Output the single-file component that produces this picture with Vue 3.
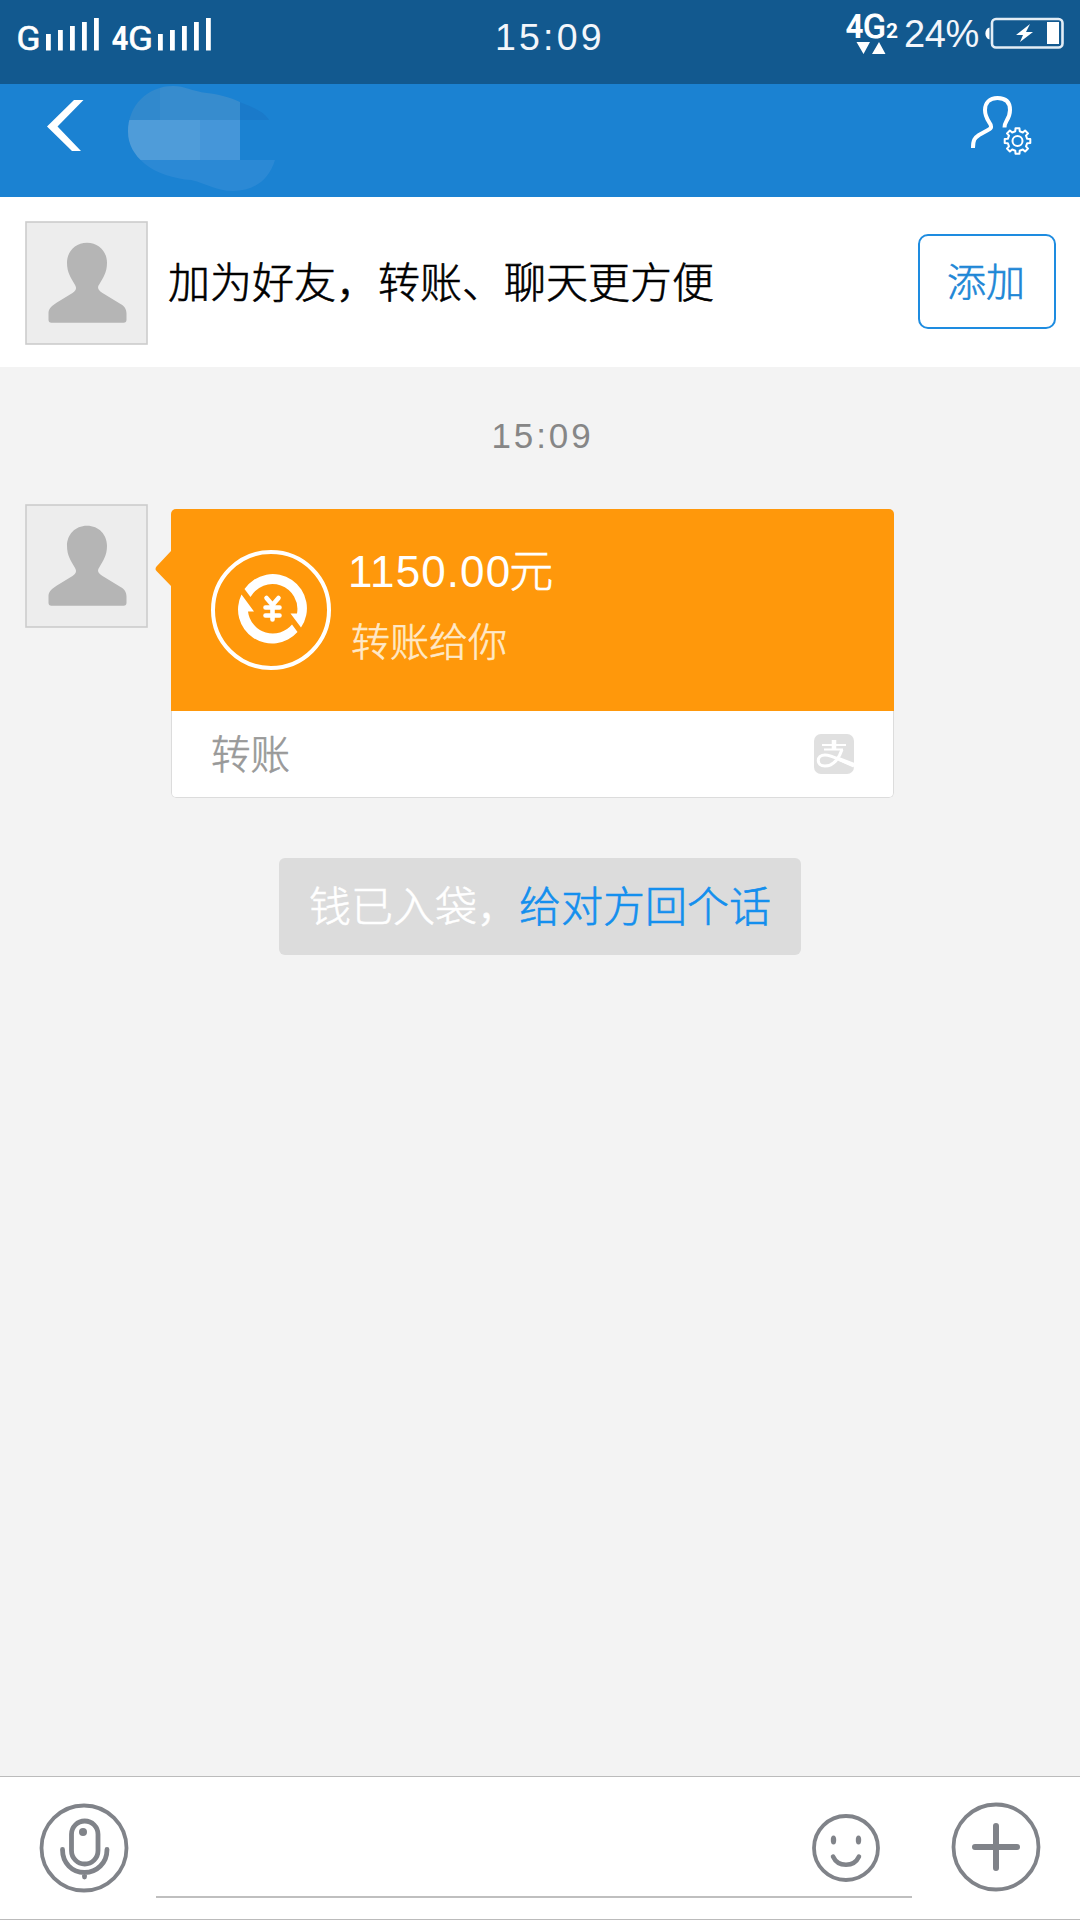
<template>
    <div class="chat-page">
        <div class="status-bar">
            <div class="status-signals">
                <svg width="196" height="84" viewBox="16 0 196 84" fill="#fff">
                    <text class="signal-text" x="16.500" y="50" textLength="24" lengthAdjust="spacingAndGlyphs">G</text>
                    <text class="signal-text signal-bold" x="111.500" y="50" textLength="17" lengthAdjust="spacingAndGlyphs">4</text>
                    <text class="signal-text" x="128" y="50" textLength="25" lengthAdjust="spacingAndGlyphs">G</text>
                    <rect v-for="bar in bars" :key="bar.x" :x="bar.x" :y="bar.y" width="4.800" :height="50.5 - bar.y" />
                </svg>
            </div>
            <span class="status-time">15:09</span>
            <div class="status-right">
                <svg width="54" height="84" viewBox="846 0 54 84" fill="#fff">
                    <text class="network-text signal-bold" x="845.500" y="38" textLength="18" lengthAdjust="spacingAndGlyphs">4</text>
                    <text class="network-text" x="863" y="38" textLength="23" lengthAdjust="spacingAndGlyphs">G</text>
                    <text class="network-small" x="886" y="38" textLength="12" lengthAdjust="spacingAndGlyphs">2</text>
                    <path d="M856.500 42h13.500l-6.500 12zM872 54h13.500l-6.500-12z" />
                </svg>
                <span class="status-percent">24%</span>
                <svg width="80" height="84" viewBox="984 0 80 84">
                    <path d="M989.500 27.500c-5.500 1-5.500 11 0 12z" fill="#fff" />
                    <rect x="992" y="19" width="70.500" height="28.500" rx="4" fill="none" stroke="#e3edf5" stroke-width="2.600" />
                    <rect x="1047" y="22" width="12" height="22" fill="#fff" />
                    <path d="M1030 24l-14 11h7l-3 7 13-10h-7z" fill="#fff" />
                </svg>
            </div>
        </div>

        <header class="chat-header">
            <svg class="back-icon" width="38" height="52" viewBox="46 100 38 52">
                <path d="M74 100h9.500L57.500 126.500 81 151h-9L47 126.500z" fill="#fff" />
            </svg>
            <svg class="masked-name" width="150" height="108" viewBox="127 85 150 108">
                <defs>
                    <clipPath id="name-shape">
                        <path d="M128 132C128 105 148 86 173 86c12 0 18 5 34 7 16 2 27 6 35 10 14 5 24 11 27 17l6 40c-6 20-21 31-42 31-17 0-25-7-42-11-17-1-35-7-46-16-11-9-17-20-17-32z" />
                    </clipPath>
                </defs>
                <g clip-path="url(#name-shape)">
                    <path d="M120 80h40v40h-40z" fill="#3189cd" />
                    <path d="M160 80h80v40h-80z" fill="#378cce" />
                    <path d="M240 80h40v40h-40z" fill="#1a7aca" />
                    <path d="M120 120h80v40h-80z" fill="#4f9cd9" />
                    <path d="M200 120h40v40h-40z" fill="#4596d9" />
                    <path d="M120 160h160v40H120z" fill="#2b89d5" />
                </g>
            </svg>
            <svg class="user-icon" width="64" height="62" viewBox="969 94 64 62" fill="none" stroke="#fff">
                <path d="M1004.500 127.500c0-2 .5-4 2-6.500 2.500-4 3.500-7 3.500-11 0-8-4.500-12-12.500-12s-12.500 5-12.500 12c0 5 1.500 8 4 12 3 4 3 6-1 8l-9 5c-4.500 3-6 5-6 13" stroke-width="4" />
                <path :d="gearPath" stroke-width="2" stroke-linejoin="round" />
                <circle cx="1017.500" cy="141" r="5" stroke-width="2" />
            </svg>
        </header>

        <section class="friend-bar">
            <svg class="avatar" viewBox="0 0 123 123" preserveAspectRatio="none">
                <rect x="1" y="1" width="121" height="121" fill="#ededed" stroke="#ccc" stroke-width="1.600" />
                <path :d="personPath" fill="#b5b5b5" />
            </svg>
            <p class="friend-text">加为好友，转账、聊天更方便</p>
            <button class="add-button">添加</button>
        </section>

        <main class="messages">
            <div class="message-time">15:09</div>
            <div class="message">
                <svg class="avatar" viewBox="0 0 123 123" preserveAspectRatio="none">
                    <rect x="1" y="1" width="121" height="121" fill="#ededed" stroke="#ccc" stroke-width="1.600" />
                    <path :d="personPath" fill="#b5b5b5" />
                </svg>
                <svg class="bubble-arrow" width="16" height="36" viewBox="0 0 16 36">
                    <path d="M16 0L1.500 15.500Q-.5 18 1.500 20L16 35z" fill="#ff980b" />
                </svg>
                <div class="transfer-card">
                    <div class="transfer-main">
                        <svg width="120" height="120" viewBox="0 0 120 120">
                            <circle cx="60" cy="60" r="58" fill="none" stroke="#fff" stroke-width="4" />
                            <g fill="#fff">
                                <path d="M33.500 39A34 34 0 0 1 90 77.500L79.500 63.500H86A25 25 0 0 0 39.500 47z" />
                                <path d="M30.500 44.500L43 61.500H37A25 25 0 0 0 81 74.500L86.500 82A34 34 0 0 1 30.500 44.500z" />
                            </g>
                            <path d="M55.500 48l6 7 6-7M61.500 55v14.500M54.500 57.500h14M54.500 65.500h14" fill="none" stroke="#fff" stroke-width="4.600" stroke-linecap="round" />
                        </svg>
                        <div class="transfer-info">
                            <div class="transfer-amount"><span class="kern">1</span>150.00<span class="yuan">元</span></div>
                            <div class="transfer-label">转账给你</div>
                        </div>
                    </div>
                    <div class="transfer-footer">
                        <span>转账</span>
                        <svg width="40" height="40" viewBox="0 0 40 40">
                            <rect width="40" height="40" rx="7" fill="#e0e0e0" />
                            <g fill="none" stroke="#fff">
                                <path d="M20 6v10" stroke-width="4.500" />
                                <path d="M8 11h24M10 15.500h19" stroke-width="1.800" />
                                <path d="M28 15.500C25 24 20 32 11 32c-9 0-9-11 0-11 7 0 14 5 29 11" stroke-width="3" />
                                <path d="M25 25l15 6" stroke-width="4" />
                            </g>
                        </svg>
                    </div>
                </div>
            </div>
            <div class="notice">钱已入袋，<a class="notice-link">给对方回个话</a></div>
        </main>

        <footer class="input-bar">
            <svg width="90" height="90" viewBox="0 0 90 90" fill="none" stroke="#808389">
                <circle cx="45" cy="45" r="42.500" stroke-width="3.800" />
                <rect x="32.500" y="18" width="26.500" height="43" rx="13.250" stroke-width="4.800" />
                <path d="M23.500 46.500C23.500 60 33 69.500 45.500 69.500S68 60 68 46.500M45.500 70v4" stroke-width="4.800" stroke-linecap="round" />
                <circle cx="44" cy="29" r="4" fill="#808389" stroke="none" />
            </svg>
            <div class="input-field">
                <svg width="70" height="70" viewBox="0 0 70 70" fill="none" stroke="#808389">
                    <circle cx="35" cy="35" r="32" stroke-width="3.800" />
                    <path d="M22 43.500c5 11 21 11 26 0" stroke-width="4.500" stroke-linecap="round" />
                    <ellipse cx="22.500" cy="27" rx="2.700" ry="4.500" fill="#808389" stroke="none" />
                    <ellipse cx="47.500" cy="27" rx="2.700" ry="4.500" fill="#808389" stroke="none" />
                </svg>
            </div>
            <svg class="plus-icon" width="90" height="90" viewBox="0 0 90 90" fill="none" stroke="#808389">
                <circle cx="45" cy="45" r="42.500" stroke-width="3.800" />
                <path d="M24 45h42M45 24v42" stroke-width="6" stroke-linecap="round" />
            </svg>
        </footer>
    </div>
</template>

<script setup>
const levels = [34, 30, 26, 22, 18];

const bars = [46, 158].flatMap((start) =>
    levels.map((y, i) => ({ x: start + i * 12, y }))
);

const personPath = 'M62 21.500c-12 0-20 9-20 20 0 10 4 15 7.500 21 2.500 4 2 6-2 9l-16 9.500c-6 4-8 6-8 11v6c0 2 1 3 3 3h72c2 0 3-1 3-3v-6c0-5-2-8-8-11l-16-9.500c-4-3-6-5-3-9 3.500-6 7.500-11 7.500-21 0-11-8-20-20-20z';

// Eight teeth around the gear centre
const gearPoints = [];
for (let i = 0; i < 8; i++) {
    const base = i * 45 - 90;
    [[-13, 10], [-9, 13], [9, 13], [13, 10]].forEach(([offset, radius]) => {
        const angle = (base + offset) * Math.PI / 180;
        gearPoints.push(`${(1017.5 + radius * Math.cos(angle)).toFixed(1)} ${(141 + radius * Math.sin(angle)).toFixed(1)}`);
    });
}
const gearPath = `M${gearPoints.join('L')}Z`;
</script>

<style>
body {
    margin: 0;
}
</style>

<style scoped>
.chat-page {
    display: flex;
    flex-direction: column;
    width: 1080px;
    height: 1920px;
    overflow: hidden;
    background: #f3f3f3;
    font-family: "Liberation Sans", "Noto Sans CJK SC", sans-serif;
    font-weight: 300;
}

svg {
    display: block;
    flex-shrink: 0;
}

.status-bar {
    display: grid;
    grid-template-columns: 479px 1fr 235px;
    height: 84px;
    box-sizing: border-box;
    padding: 0 16px;
    background: #12598f;
    color: #f3f6fb;
}

.signal-text {
    font: 33px Roboto, sans-serif;
    stroke: #fff;
    stroke-width: 0.6px;
}

.network-text {
    font: 33px Roboto, sans-serif;
    stroke: #fff;
    stroke-width: 1px;
}

.signal-text.signal-bold,
.network-text.signal-bold {
    font-weight: 700;
    stroke-width: 0;
}

.network-small {
    font: 700 20px Roboto, sans-serif;
}

.status-time {
    font-size: 37.5px;
    line-height: 75px;
    letter-spacing: 3.2px;
}

.status-right {
    display: flex;
    justify-content: flex-end;
}

.status-percent {
    width: 80px;
    margin-left: 4px;
    font-size: 38px;
    line-height: 68px;
    letter-spacing: -0.4px;
}

.chat-header {
    display: flex;
    height: 113px;
    box-sizing: border-box;
    padding: 0 47px 0 46px;
    background: #1b82d2;
}

.back-icon {
    margin-top: 16px;
}

.masked-name {
    margin: 1px 0 0 43px;
}

.user-icon {
    margin: 10px 0 0 auto;
}

.friend-bar {
    display: flex;
    align-items: center;
    height: 170px;
    box-sizing: border-box;
    padding: 1px 24px 0 25px;
    background: #fff;
}

.avatar {
    width: 123px;
    height: 124px;
}

.friend-text,
.add-button,
.yuan,
.transfer-label,
.transfer-footer,
.notice {
    -webkit-text-stroke: 0.6px currentColor;
}

.friend-text {
    flex: 1;
    margin: 0 0 0 20px;
    padding-top: 2px;
    color: #000;
    font-size: 42px;
    line-height: 60px;
}

.add-button {
    width: 138px;
    height: 95px;
    margin-bottom: 2px;
    padding: 0 2px 5px 0;
    border: 2px solid #1e8ce0;
    border-radius: 10px;
    background: #fff;
    color: #1e87d6;
    font-family: inherit;
    font-size: 39px;
    font-weight: inherit;
}

.messages {
    display: flex;
    flex: 1;
    flex-direction: column;
    align-items: center;
}

.message-time {
    height: 137px;
    padding-left: 5px;
    color: #868686;
    font-size: 35px;
    line-height: 138px;
    letter-spacing: 2.9px;
}

.message {
    display: flex;
    align-self: stretch;
    padding-left: 25px;
}

.bubble-arrow {
    margin: 47px 0 0 7px;
}

.transfer-card {
    width: 723px;
    height: 289px;
    margin-top: 5px;
    box-sizing: border-box;
    border-radius: 5px;
    overflow: hidden;
}

.transfer-main {
    display: flex;
    align-items: center;
    height: 202px;
    padding-left: 40px;
    background: #ff980b;
}

.transfer-info {
    margin: -5px 0 0 17px;
}

.transfer-amount {
    color: #fff;
    font-size: 44px;
    line-height: 70px;
    letter-spacing: 1.1px;
}

.kern {
    letter-spacing: -2.4px;
}

.yuan {
    margin-left: -2px;
}

.transfer-label {
    padding-left: 3px;
    color: #ffe9c8;
    font-size: 39px;
    line-height: 72px;
}

.transfer-footer {
    display: flex;
    align-items: center;
    justify-content: space-between;
    height: 87px;
    box-sizing: border-box;
    padding: 0 39px;
    border: 1px solid #dcdcdc;
    border-top: 0;
    border-radius: 0 0 5px 5px;
    background: #fff;
    color: #999;
    font-size: 39.5px;
}

.transfer-footer span {
    padding-bottom: 6px;
}

.notice {
    width: 522px;
    height: 97px;
    margin-top: 60px;
    border-radius: 6px;
    background: #dcdcdc;
    color: #fff;
    font-size: 42px;
    line-height: 99px;
    text-align: center;
    white-space: nowrap;
}

.notice-link {
    color: #148fee;
}

.input-bar {
    display: flex;
    align-items: flex-start;
    height: 144px;
    box-sizing: border-box;
    padding: 26px 39px 0;
    border-top: 1px solid #bbb;
    border-bottom: 1px solid #bbb;
    background: #fff;
}

.input-field {
    display: flex;
    flex: 1;
    align-items: flex-start;
    justify-content: flex-end;
    height: 95px;
    box-sizing: border-box;
    margin: 0 39px 0 27px;
    padding: 10px 31px 0 0;
    border-bottom: 2px solid #bfbfbf;
}

.plus-icon {
    margin-top: -1px;
}
</style>
